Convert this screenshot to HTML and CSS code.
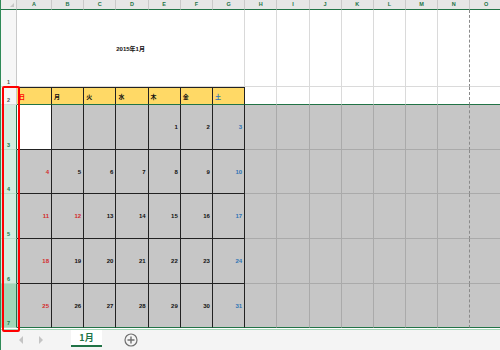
FILE: index.html
```html
<!DOCTYPE html>
<html lang="ja">
<head>
  <meta charset="UTF-8">
  <title>2015年1月 カレンダー</title>
  <link rel="stylesheet" href="styles.css">
</head>
<body>
  <div class="book">
    <div class="sheet" id="sheet"></div>
    <div class="tabs">
      <svg class="nav" width="6" height="8" viewBox="0 0 6 8"><path d="M5 0 L1 4 L5 8 Z" fill="#c4c4c4"/></svg>
      <svg class="nav" width="6" height="8" viewBox="0 0 6 8"><path d="M1 0 L5 4 L1 8 Z" fill="#c4c4c4"/></svg>
      <div class="tab">1月</div>
      <svg class="add" width="14" height="14" viewBox="0 0 14 14">
        <circle cx="7" cy="7" r="6" fill="none" stroke="#6f6f6f" stroke-width="1.2"/>
        <path d="M7 3.5 V10.5 M3.5 7 H10.5" stroke="#6f6f6f" stroke-width="1.4"/>
      </svg>
    </div>
    <!-- marker drawn over the row headers -->
    <div class="mark"></div>
  </div>
  <script>
    const cols = 'ABCDEFGHIJKLMNO'.split('');
    const days = [
      { name: '日', cls: 'sun' },
      { name: '月', cls: '' },
      { name: '火', cls: '' },
      { name: '水', cls: '' },
      { name: '木', cls: '' },
      { name: '金', cls: '' },
      { name: '土', cls: 'sat' }
    ];
    const weeks = [
      [null, null, null, null, 1, 2, 3],
      [4, 5, 6, 7, 8, 9, 10],
      [11, 12, 13, 14, 15, 16, 17],
      [18, 19, 20, 21, 22, 23, 24],
      [25, 26, 27, 28, 29, 30, 31]
    ];
    const holidays = [12];

    const sheet = document.getElementById('sheet');
    const cell = (cls, text) => {
      const el = document.createElement('div');
      el.className = cls;
      if (text !== undefined && text !== null) el.textContent = text;
      sheet.appendChild(el);
      return el;
    };
    // empty cells from column H to O
    const rest = extra => {
      for (let i = 7; i < cols.length; i++) {
        cell('cell' + extra + (cols[i] === 'N' ? ' page-break' : ''));
      }
    };

    // column headers
    cell('corner');
    cols.forEach(c => cell('col-head', c));

    // row 1: title
    cell('row-head', '1');
    cell('title', '2015年1月');
    rest(' top');

    // row 2: day names
    cell('row-head', '2');
    days.forEach(d => cell('day ' + d.cls, d.name));
    rest(' top head');

    // rows 3-7: dates
    weeks.forEach((week, w) => {
      cell('row-head sel' + (w === weeks.length - 1 ? ' cur' : ''), w + 3);
      week.forEach((n, i) => {
        let cls = 'date';
        if (w === 0 && i === 0) cls += ' active';
        if (i === 0 || holidays.includes(n)) cls += ' sun';
        if (i === 6) cls += ' sat';
        if (w === weeks.length - 1) cls += ' last';
        cell(cls, n);
      });
      rest(w === weeks.length - 1 ? ' last' : '');
    });
  </script>
</body>
</html>
```

FILE: styles.css
```css
/* Page */
body {
  margin: 0;
  width: 500px;
  height: 350px;
  overflow: hidden;
  background: #ffffff;
  font-family: "Liberation Sans", "Noto Sans CJK JP", sans-serif;
}

.book {
  position: relative;
  height: 350px;
  border-left: 1px solid #2f8a57;
  display: flex;
  flex-direction: column;
}

/* Worksheet grid */
.sheet {
  display: grid;
  grid-template-columns: 16px 35px repeat(14, 32.2px);
  grid-template-rows: 10px 77px 18px repeat(5, 44.7px);
  height: 329px;
  overflow: hidden;
}

.sheet > div {
  box-sizing: border-box;
  overflow: hidden;
  white-space: nowrap;
}

/* Headers */
.corner {
  background: #ececec;
  border-right: 1px solid #c9c9c9;
  border-bottom: 1px solid #217346;
  position: relative;
}

.corner::after {
  content: "";
  position: absolute;
  right: 2px;
  bottom: 2px;
  border-left: 4px solid transparent;
  border-bottom: 4px solid #c6c6c6;
}

.col-head {
  background: #e6e6e6;
  border-right: 1px solid #c9c9c9;
  border-bottom: 1px solid #217346;
  color: #217346;
  font-size: 5.5px;
  font-weight: bold;
  text-align: center;
  line-height: 9px;
}

.row-head {
  background: #f6f6f6;
  border-right: 1px solid #c9c9c9;
  border-bottom: 1px solid #d9d9d9;
  color: #555;
  font-size: 5.5px;
  font-weight: bold;
  text-align: center;
  display: flex;
  align-items: flex-end;
  justify-content: center;
  padding-bottom: 1px;
}

.row-head.sel {
  background: #d3ecde;
  color: #217346;
  border-right-color: #217346;
  border-bottom-color: #b9dcc7;
}

.row-head.cur {
  background: #a2d6b7;
}

/* Row 1 */
.title {
  grid-column: span 7;
  display: flex;
  align-items: center;
  justify-content: center;
  font-size: 6px;
  font-weight: bold;
  color: #111;
  border-right: 1px solid #d9d9d9;
  border-bottom: 1px solid #d9d9d9;
}

/* Row 2 */
.day {
  background: #ffd966;
  border-right: 1px solid #222;
  border-bottom: 1px solid #217346;
  border-top: 1px solid #222;
  font-size: 6px;
  font-weight: bold;
  color: #111;
  padding-left: 2px;
  display: flex;
  align-items: center;
}

.day.sun {
  color: #ff0000;
}

.day.sat {
  color: #2f75b5;
}

/* Calendar dates */
.date {
  background: #c6c6c6;
  border-right: 1px solid #222;
  border-bottom: 1px solid #222;
  font-size: 6px;
  font-weight: bold;
  color: #111;
  display: flex;
  align-items: center;
  justify-content: flex-end;
  padding-right: 2px;
}

.date.active {
  background: #ffffff;
}

.date.sun {
  color: #d42a2a;
}

.date.sat {
  color: #2f75b5;
}

.date.last {
  border-bottom: 1px solid #217346;
}

/* Plain cells */
.cell {
  background: #c6c6c6;
  border-right: 1px solid #aaaaaa;
  border-bottom: 1px solid #aaaaaa;
}

.cell.top {
  background: #ffffff;
  border-right-color: #dadada;
  border-bottom-color: #dadada;
}

.cell.head {
  border-bottom: 1px solid #217346;
}

.cell.last {
  border-bottom: 1px solid #217346;
}

.cell.page-break {
  border-right: 1px dashed #8a8a8a;
}

/* Sheet tabs */
.tabs {
  flex: 1;
  background: #f4f4f4;
  border-top: 1px solid #a8d8ba;
  display: flex;
  align-items: flex-start;
}

.nav {
  margin-top: 6px;
  margin-left: 17px;
}

.nav + .nav {
  margin-left: 14px;
}

.tab {
  margin-left: 27px;
  width: 31px;
  height: 17px;
  box-sizing: border-box;
  background: #ffffff;
  border-bottom: 2px solid #217346;
  color: #217346;
  font-family: "Noto Sans CJK JP", sans-serif;
  font-size: 9px;
  font-weight: bold;
  text-align: center;
  line-height: 16px;
}

.add {
  margin-left: 22px;
  margin-top: 3px;
}

/* Red annotation over the row headers */
.mark {
  position: absolute;
  left: 1px;
  top: 86px;
  width: 18px;
  height: 246px;
  box-sizing: border-box;
  border: 2px solid #ff0000;
  border-radius: 2px;
}
```
